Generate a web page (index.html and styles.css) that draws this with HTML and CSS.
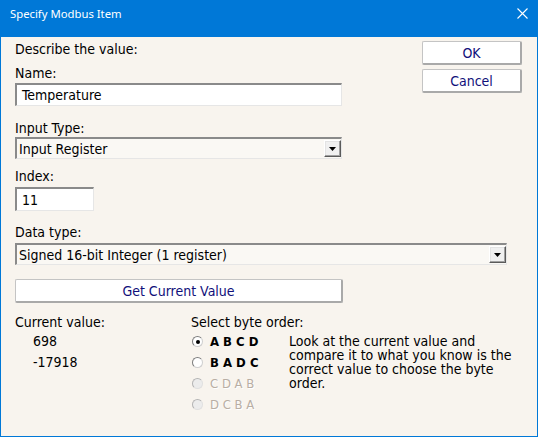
FILE: index.html
```html
<!DOCTYPE html>
<html>
<head>
<meta charset="utf-8">
<link rel="stylesheet" href="styles.css">
</head>
<body>
<div class="window">
  <div class="titlebar">
    <span class="title">Specify Modbus Item</span>
    <svg class="close" width="11" height="11" viewBox="0 0 11 11"><path d="M0.5 0.5L10.5 10.5M10.5 0.5L0.5 10.5" stroke="#fff" stroke-width="1.1" fill="none"/></svg>
  </div>
  <div class="content">
    <div class="top">
      <div class="form-col">
        <div class="label">Describe the value:</div>
        <div class="label gap-name">Name:</div>
        <div class="field name-field">Temperature</div>
        <div class="label gap-type">Input Type:</div>
        <div class="combo type-combo"><span class="combo-text">Input Register</span><span class="combo-btn"><svg width="7" height="4" viewBox="0 0 7 4"><path d="M0 0H7L3.5 4Z" fill="#000"/></svg></span></div>
        <div class="label gap-index">Index:</div>
        <div class="field index-field">11</div>
      </div>
      <div class="btn-col">
        <div class="btn">OK</div>
        <div class="btn">Cancel</div>
      </div>
    </div>
    <div class="label gap-data">Data type:</div>
    <div class="combo data-combo"><span class="combo-text">Signed 16-bit Integer (1 register)</span><span class="combo-btn"><svg width="7" height="4" viewBox="0 0 7 4"><path d="M0 0H7L3.5 4Z" fill="#000"/></svg></span></div>
    <div class="btn wide-btn">Get Current Value</div>
    <div class="bottom">
      <div class="values-col">
        <div class="label">Current value:</div>
        <div class="value">698</div>
        <div class="value">-17918</div>
      </div>
      <div class="radio-col">
        <div class="label">Select byte order:</div>
        <div class="radio-row"><span class="radio checked"></span><span class="radio-label">A B C D</span></div>
        <div class="radio-row"><span class="radio"></span><span class="radio-label">B A D C</span></div>
        <div class="radio-row disabled"><span class="radio"></span><span class="radio-label">C D A B</span></div>
        <div class="radio-row disabled"><span class="radio"></span><span class="radio-label">D C B A</span></div>
      </div>
      <div class="help">Look at the current value and compare it to what you know is the correct value to choose the byte order.</div>
    </div>
  </div>
</div>
</body>
</html>
```
FILE: styles.css
```css
body {
  margin: 0;
  background: #ffffff;
}

.window {
  width: 538px;
  height: 437px;
  box-sizing: border-box;
  border: 1px solid #0078d7;
  border-top: 0;
  background: #f8f4ee;
  display: flex;
  flex-direction: column;
  font-family: "DejaVu Sans Condensed", "DejaVu Sans", sans-serif;
  font-stretch: condensed;
  font-size: 14px;
  color: #000;
}

.titlebar {
  height: 37px;
  flex: none;
  background: #0078d7;
  display: flex;
  justify-content: space-between;
  align-items: flex-start;
}

.title {
  color: #fff;
  font-family: "Noto Sans", "Open Sans", sans-serif;
  font-size: 11.3px;
  line-height: 16px;
  padding: 6px 0 0 9px;
}

.close {
  margin: 8px 9px 0 0;
}

.content {
  padding: 4px 14px 0 14px;
  display: flex;
  flex-direction: column;
}

.top {
  display: flex;
  justify-content: space-between;
  align-items: flex-start;
}

.form-col {
  width: 328px;
  display: flex;
  flex-direction: column;
}

.label {
  height: 16px;
  line-height: 16px;
  white-space: nowrap;
}

.gap-name { margin-top: 8px; }
.gap-type { margin-top: 14px; }
.gap-index { margin-top: 9px; }
.gap-data { margin-top: 13px; }

.field {
  box-sizing: border-box;
  background: #fff;
  border-top: 2px solid #8a8a8a;
  border-left: 2px solid #8a8a8a;
  border-right: 1px solid #e6e6e6;
  border-bottom: 1px solid #e6e6e6;
  padding-left: 5px;
  display: flex;
  align-items: center;
}

.name-field {
  margin-top: 2px;
  width: 327px;
  height: 23px;
}

.index-field {
  margin-top: 3px;
  width: 79px;
  height: 24px;
}

.combo {
  box-sizing: border-box;
  height: 22px;
  background: #faf8f4;
  border-top: 2px solid #8a8a8a;
  border-left: 2px solid #8a8a8a;
  border-right: 1px solid #e6e6e6;
  border-bottom: 1px solid #e6e6e6;
  display: flex;
  align-items: center;
  justify-content: space-between;
  padding: 1px 0 1px 2px;
}

.type-combo {
  margin-top: 1px;
  width: 327px;
}

.data-combo {
  margin-top: 3px;
  width: 492px;
}

.combo-text {
  white-space: nowrap;
}

.combo-btn {
  box-sizing: border-box;
  width: 17px;
  height: 17px;
  background: #f0f0f0;
  border-top: 1px solid #ffffff;
  border-left: 1px solid #ffffff;
  border-right: 1px solid #5a5a5a;
  border-bottom: 1px solid #5a5a5a;
  box-shadow: inset -1px -1px 0 #a0a0a0, inset 1px 1px 0 #e3e3e3;
  display: flex;
  align-items: center;
  justify-content: center;
}

.btn-col {
  display: flex;
  flex-direction: column;
  gap: 4px;
  margin-right: 1px;
}

.btn {
  box-sizing: border-box;
  width: 100px;
  height: 24px;
  background: #fff;
  border: 1px solid #c4c4c4;
  border-right: 2px solid #a9a9a9;
  border-bottom: 2px solid #a9a9a9;
  border-radius: 2px;
  color: #10107a;
  display: flex;
  align-items: center;
  justify-content: center;
}

.wide-btn {
  margin-top: 14px;
  width: 328px;
}

.bottom {
  margin-top: 11px;
  display: flex;
  align-items: flex-start;
}

.values-col {
  width: 176px;
  display: flex;
  flex-direction: column;
}

.value {
  height: 21px;
  line-height: 21px;
  padding-left: 18px;
}

.values-col .label,
.radio-col .label {
  margin-bottom: 1px;
}

.radio-col {
  width: 98px;
  display: flex;
  flex-direction: column;
}

.radio-row {
  height: 21px;
  display: flex;
  align-items: center;
  gap: 7px;
  padding-left: 1px;
}

.radio {
  box-sizing: border-box;
  width: 11px;
  height: 11px;
  border-radius: 50%;
  background: #fff;
  border: 1px solid #7d7d7d;
  border-right-color: #cfcfcf;
  border-bottom-color: #cfcfcf;
  display: flex;
  align-items: center;
  justify-content: center;
}

.radio.checked::after {
  content: "";
  width: 4px;
  height: 4px;
  border-radius: 50%;
  background: #000;
}

.radio-label {
  font-weight: bold;
  font-size: 13px;
  white-space: nowrap;
}

.disabled .radio {
  background: #ececec;
  border-color: #b4b4b4;
  border-right-color: #e0e0e0;
  border-bottom-color: #e0e0e0;
}

.disabled .radio-label {
  font-weight: normal;
  color: #b8aea4;
  text-shadow: 1px 1px 0 #ffffff;
}

.help {
  margin-top: 20px;
  width: 228px;
  line-height: 14px;
}
```
